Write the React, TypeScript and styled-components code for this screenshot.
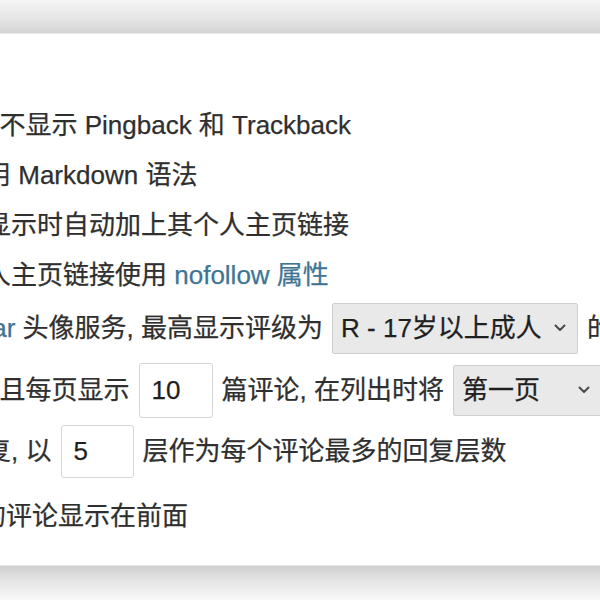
import React from 'react';
import styled, { createGlobalStyle } from 'styled-components';

const GlobalStyle = createGlobalStyle`
  html, body {
    margin: 0;
    padding: 0;
    width: 600px;
    height: 600px;
    overflow: hidden;
    background: #ffffff;
  }
`;

const Page = styled.div`
  width: 600px;
  height: 600px;
  display: flex;
  flex-direction: column;
  font-family: "Liberation Sans", "Noto Sans CJK SC", sans-serif;
  font-size: 26px;
  color: #2f2f2f;
  -webkit-text-stroke: 0.25px currentColor;
`;

const TopShade = styled.div`
  height: 33px;
  flex-shrink: 0;
  background: linear-gradient(to bottom, #f6f6f6 0%, #e6e6e6 55%, #d4d4d4 100%);
  border-bottom: 1px solid #e9e9e9;
`;

const BottomShade = styled.div`
  flex: 1;
  background: linear-gradient(to bottom, #cfcfcf 0%, #e4e4e4 40%, #f8f8f8 100%);
  border-top: 1px solid #e6e6e6;
`;

const Card = styled.div`
  height: 531px;
  flex-shrink: 0;
  background: #ffffff;
  overflow: hidden;
  padding-top: 66px;
  box-sizing: border-box;
`;

const OptionList = styled.ul`
  list-style: none;
  margin: 0 0 0 -170px;
  padding: 0;
`;

const Row = styled.li<{ $h: number }>`
  height: ${(p) => p.$h}px;
  display: flex;
  align-items: center;
  white-space: nowrap;
  line-height: 30px;
`;

const Check = styled.input.attrs({ type: 'checkbox', defaultChecked: true })`
  width: 16px;
  height: 16px;
  margin: 0 9px 0 0;
  flex-shrink: 0;
`;

const Label = styled.label`
  display: flex;
  align-items: center;
`;

const Link = styled.a`
  color: #3f7594;
  text-decoration: none;
`;

const NumberInput = styled.input<{ $w: number; $h: number }>`
  box-sizing: border-box;
  width: ${(p) => p.$w}px;
  height: ${(p) => p.$h}px;
  margin: 0 8px 0 10px;
  padding: 0 0 0 11px;
  border: 1px solid #d6d6d6;
  border-radius: 3px;
  background: #ffffff;
  font: inherit;
  color: #1f1f1f;
  outline: none;
`;

const SelectBox = styled.div<{ $w: number }>`
  box-sizing: border-box;
  width: ${(p) => p.$w}px;
  height: 51px;
  margin: 0 9px 0 9px;
  padding: 0 11px 0 8px;
  display: flex;
  align-items: center;
  justify-content: space-between;
  flex-shrink: 0;
  border: 1px solid #cfcfcf;
  border-radius: 2px;
  background: #e9e9e9;
  color: #1f1f1f;
`;

const Chevron = () => (
  <svg width="12" height="8" viewBox="0 0 12 8" fill="none">
    <polyline points="1.5,1.5 6,6 10.5,1.5" stroke="#4a4a4a" strokeWidth="2" strokeLinecap="round" strokeLinejoin="round" />
  </svg>
);

const Select = ({ value, width }: { value: string; width: number }) => (
  <SelectBox $w={width} role="combobox">
    <span>{value}</span>
    <Chevron />
  </SelectBox>
);

export default function App() {
  return (
    <>
      <GlobalStyle />
      <Page>
        <TopShade />
        <Card>
          <OptionList>
            <Row $h={50}>
              <Check />
              <Label>仅显示评论, 不显示 Pingback 和 Trackback</Label>
            </Row>
            <Row $h={50}>
              <Check />
              <Label>在评论中使用 Markdown 语法</Label>
            </Row>
            <Row $h={50}>
              <Check />
              <Label>评论者名称显示时自动加上其个人主页链接</Label>
            </Row>
            <Row $h={50}>
              <Check />
              <Label>
                对评论者个人主页链接使用&nbsp;<Link href="#">nofollow 属性</Link>
              </Label>
            </Row>
            <Row $h={56}>
              <Check />
              <Label>
                启用&nbsp;<Link href="#">Gravatar</Link>&nbsp;头像服务, 最高显示评级为
                <Select value="R - 17岁以上成人" width={246} />
                的头像
              </Label>
            </Row>
            <Row $h={68}>
              <Check />
              <Label>
                启用分页, 并且每页显示
                <NumberInput $w={74} $h={55} defaultValue="10" />
                篇评论, 在列出时将
                <Select value="第一页" width={149} />
                作为默认显示
              </Label>
            </Row>
            <Row $h={54}>
              <Check />
              <Label>
                启用评论回复, 以
                <NumberInput $w={73} $h={53} defaultValue="5" />
                层作为每个评论最多的回复层数
              </Label>
            </Row>
            <Row $h={76}>
              <Check />
              <Label>
                将
                <Select value="较新的" width={81} />
                的评论显示在前面
              </Label>
            </Row>
          </OptionList>
        </Card>
        <BottomShade />
      </Page>
    </>
  );
}
